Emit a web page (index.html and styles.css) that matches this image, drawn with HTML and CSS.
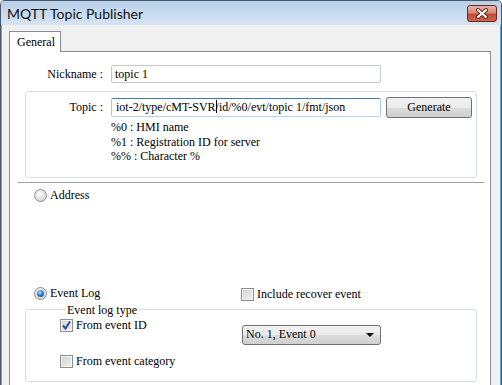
FILE: index.html
```html
<!DOCTYPE html>
<html lang="en">
<head>
    <meta charset="UTF-8">
    <title>MQTT Topic Publisher</title>
    <link rel="stylesheet" href="styles.css">
</head>
<body>
    <div class="window">
        <div class="titlebar">
            <span class="title">MQTT Topic Publisher</span>
            <span class="close">
                <svg width="14" height="11" viewBox="0 0 14 11">
                    <path d="M3 2 L11 9 M11 2 L3 9" stroke="#5a2116" stroke-width="4" stroke-linecap="round"/>
                    <path d="M3 2 L11 9 M11 2 L3 9" stroke="#fff" stroke-width="2.2" stroke-linecap="round"/>
                </svg>
            </span>
        </div>
        <div class="client">
            <div class="tabs">
                <div class="tab">General</div>
            </div>
            <div class="panel">
                <div class="row nick-row">
                    <span class="lbl nick-lbl">Nickname :</span>
                    <div class="field">topic 1</div>
                </div>

                <div class="group topic-group">
                    <div class="row">
                        <span class="lbl topic-lbl">Topic :</span>
                        <div class="field focus">iot-2/type/cMT-SVR<span class="caret"></span>/id/%0/evt/topic 1/fmt/json</div>
                        <span class="btn">Generate</span>
                    </div>
                    <div class="hints">
                        <div>%0 : HMI name</div>
                        <div>%1 : Registration ID for server</div>
                        <div>%% : Character %</div>
                    </div>
                </div>

                <div class="sep"></div>

                <div class="opt addr-row">
                    <span class="radio"></span>Address
                </div>

                <div class="event-row">
                    <div class="opt event-opt">
                        <span class="radio on"></span>Event Log
                    </div>
                    <div class="opt recover">
                        <span class="check"></span>Include recover event
                    </div>
                </div>

                <fieldset class="group evt-group">
                    <legend>Event log type</legend>
                    <div class="evt-grid">
                        <div class="opt">
                            <span class="check on">
                                <svg width="11" height="11" viewBox="0 0 11 11">
                                    <path d="M2 5.5 L4.5 8.5 L9 1.5" fill="none" stroke="#2f4f9e" stroke-width="2"/>
                                </svg>
                            </span>From event ID
                        </div>
                        <div class="combo">
                            <span>No. 1, Event 0</span>
                            <span class="arrow"></span>
                        </div>
                        <div class="opt cat-row">
                            <span class="check"></span>From event category
                        </div>
                    </div>
                </fieldset>
            </div>
        </div>
    </div>
</body>
</html>
```

FILE: styles.css
```css
body {
    margin: 0;
    font-family: "Liberation Serif", serif;
    font-size: 12px;
    color: #000;
    background: #fff;
}

.window {
    width: 502px;
    height: 385px;
    box-sizing: border-box;
    border: 1px solid #4b5867;
    border-bottom: none;
    border-radius: 5px 5px 0 0;
    overflow: hidden;
    display: flex;
    flex-direction: column;
    background: #f0f0f0;
}

.titlebar {
    height: 24px;
    flex-shrink: 0;
    display: flex;
    align-items: center;
    justify-content: space-between;
    padding: 0 4px 0 6px;
    background: linear-gradient(#b8cfe9, #c7daee 50%, #d6e4f3);
}

.title {
    font-family: "Lato", sans-serif;
    font-size: 14px;
    color: #111;
    margin-top: 1px;
}

.close {
    width: 28px;
    height: 15px;
    margin-top: 1px;
    border: 1px solid #6b2a20;
    border-radius: 3px;
    background: linear-gradient(#e8b3a6, #d78a79 45%, #c24a35 55%, #d0654e);
    display: flex;
    align-items: center;
    justify-content: center;
}

.client {
    flex: 1;
    border-left: 1px solid #7ba4d4;
    border-right: 1px solid #5aa7e0;
    padding: 6px 9px 0 7px;
}

.tabs {
    display: flex;
}

.tab {
    width: 52px;
    height: 21px;
    box-sizing: border-box;
    border: 1px solid #898c95;
    border-bottom: none;
    background: #fff;
    padding: 3px 0 0 7px;
    margin-bottom: -1px;
    position: relative;
    z-index: 1;
}

.panel {
    width: 482px;
    height: 340px;
    box-sizing: border-box;
    border: 1px solid #898c95;
    background: #fff;
}

.row {
    display: flex;
    align-items: center;
}

.lbl {
    text-align: right;
    padding-right: 8px;
    box-sizing: border-box;
}

.nick-row {
    margin-top: 13px;
}

.nick-lbl {
    width: 101px;
}

.topic-lbl {
    width: 85px;
}

.field {
    width: 270px;
    height: 18px;
    box-sizing: border-box;
    border: 1px solid #c5c8cc;
    border-radius: 2px;
    padding: 1px 0 0 3px;
    white-space: nowrap;
    overflow: hidden;
}

.field.focus {
    height: 19px;
    border-color: #3d7bad #a4c9e3 #b5d3ea #a4c9e3;
    padding-left: 4px;
}

.caret {
    display: inline-block;
    width: 1px;
    height: 13px;
    margin-right: -1px;
    vertical-align: -2px;
    background: #000;
}

.btn {
    width: 86px;
    height: 21px;
    box-sizing: border-box;
    margin-left: 5px;
    border: 1px solid #707070;
    border-radius: 3px;
    background: linear-gradient(#f2f2f2, #ebebeb 50%, #dddddd 51%, #cfcfcf);
    text-align: center;
    line-height: 19px;
}

.group {
    border: 1px solid #d5dfe5;
    border-radius: 3px;
}

.topic-group {
    margin: 8px 13px 0 15px;
    padding: 5px 0 13px 0;
}

.hints {
    margin: 2px 0 0 85px;
    line-height: 14.5px;
}

.sep {
    height: 1px;
    margin: 4px 6px 0 8px;
    background: #a0a0a0;
    border-bottom: 1px solid #fff;
}

.opt {
    display: flex;
    align-items: center;
    height: 13px;
}

.addr-row {
    margin: 5px 0 0 24px;
}

.radio {
    width: 13px;
    height: 13px;
    box-sizing: border-box;
    border-radius: 50%;
    border: 1px solid #8e8f8f;
    background: radial-gradient(circle at 40% 35%, #ffffff, #e0e0e0 55%, #c4c4c4);
    margin-right: 3px;
    display: flex;
    align-items: center;
    justify-content: center;
}

.radio.on::after {
    content: "";
    width: 7px;
    height: 7px;
    border-radius: 50%;
    background: radial-gradient(circle at 40% 35%, #a7e1ff, #2a78c8 50%, #0d3f7d);
}

.check {
    width: 13px;
    height: 13px;
    box-sizing: border-box;
    border: 1px solid #8e8f8f;
    background: linear-gradient(135deg, #cfcfcf, #f4f4f4);
    box-shadow: inset 0 0 0 1px #f4f4f4;
    margin-right: 3px;
    display: flex;
    align-items: center;
    justify-content: center;
}

.event-row {
    display: flex;
    margin: 85px 0 0 24px;
}

.event-opt {
    width: 207px;
}

.recover {
    margin-top: 1px;
}

.evt-group {
    margin: 2px 13px 0 15px;
    padding: 2px 0 13px 34px;
    min-width: 0;
}

.evt-group legend {
    margin-left: 5px;
    padding: 0 2px;
    line-height: 14px;
}

.evt-grid {
    display: grid;
    grid-template-columns: 182px 139px;
}

.combo {
    height: 20px;
    box-sizing: border-box;
    margin-top: 6px;
    border: 1px solid #707070;
    border-radius: 3px;
    background: linear-gradient(#f2f2f2, #ebebeb 50%, #dddddd 51%, #cfcfcf);
    display: flex;
    align-items: center;
    justify-content: space-between;
    padding: 0 6px 0 3px;
}

.arrow {
    width: 0;
    height: 0;
    border-left: 4px solid transparent;
    border-right: 4px solid transparent;
    border-top: 4px solid #000;
}

.cat-row {
    margin-top: 10px;
}
```
